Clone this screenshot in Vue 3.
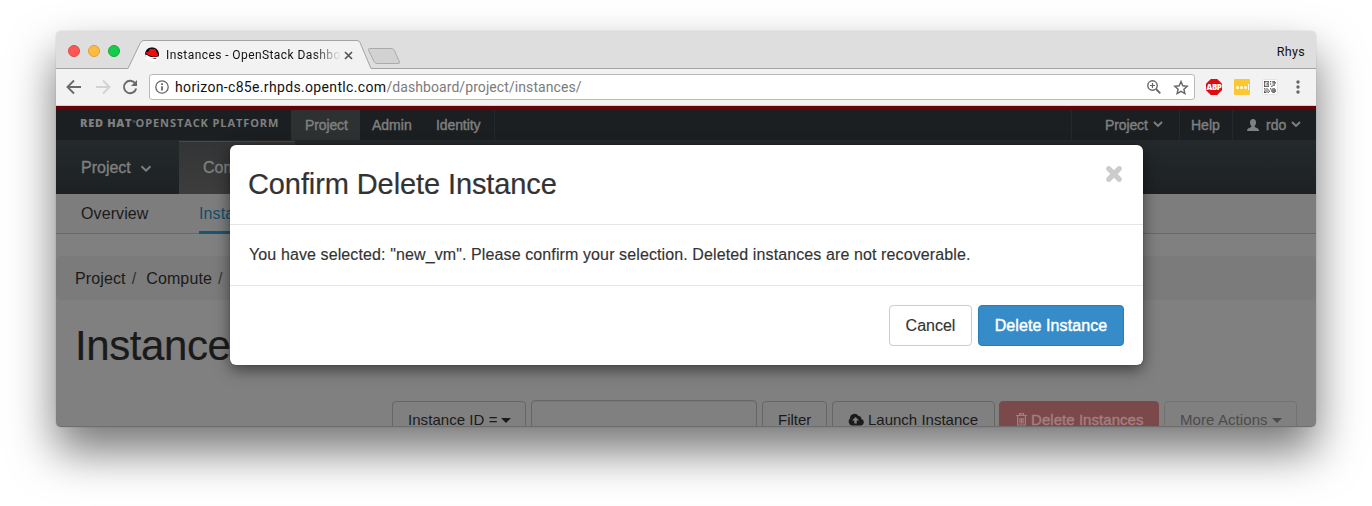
<script setup>
const qr = [
  '1111010110', '1001000111', '1011010010', '1001000110', '1111001000',
  '0000000000', '1010010110', '0101001111', '1010101111', '1101000110'
]
</script>

<template>
  <div class="desk">
    <div class="window">
      <div class="tabstrip">
        <div class="lights"><i class="red"></i><i class="amber"></i><i class="green"></i></div>
        <svg class="tabshape" width="276" height="38" viewBox="0 0 276 38">
          <path d="M0 37.500 L12.500 11.500 Q14 9.500 16 9.500 H229 Q231 9.500 232 11.500 L243 37.500 V39 H0Z" fill="#f2f2f2" />
          <path d="M0 37.500 L12.500 11.500 Q14 9.500 16 9.500 H229 Q231 9.500 232 11.500 L243 37.500" fill="none" stroke="#a3a3a3" />
          <path d="M241.500 17.500 H263 Q265.500 17.500 266.500 19.500 L271.500 31 Q272 32.500 270 32.500 H249 Q247 32.500 246 30.500 L240.500 19 Q240 17.500 241.500 17.500Z" fill="#d2d2d2" stroke="#ababab" />
        </svg>
        <div class="tab">
          <svg class="hat" width="16" height="16" viewBox="0 0 16 16">
            <path d="M1 9 C1 4 4 1.500 8 1.500 C12 1.500 15 4 15 9 L14.500 11 H2Z" fill="#090909" />
            <path d="M1 8.500 Q3 8.500 5 10.300 Q9 12 14.900 10.300 Q13 15.500 8 15.500 Q2 15.500 1 8.500Z" fill="#fff" />
            <path d="M4 6.300 L5.800 2.900 Q7 2.400 8 3.100 Q10.200 2 11.500 3.500 L13 7 Q15 8.800 13.500 10 Q10 11.800 5 9.300 Q1.300 7.500 2.200 6.300 Q3 5.600 4 6.300Z" fill="#f00d10" />
            <path d="M6.500 11.600 L9 12.400 L12.500 11.900 L11.800 13 L9.500 12.900Z" fill="#222" />
          </svg>
          <span class="tabtitle">Instances - OpenStack Dashbo</span>
          <svg class="tabx" width="9" height="9" viewBox="0 0 9 9"><path d="M1 1 L8 8 M8 1 L1 8" stroke="#555" stroke-width="1.700" /></svg>
        </div>
        <span class="user">Rhys</span>
      </div>

      <div class="toolbar">
        <svg class="back" width="16" height="16" viewBox="0 0 16 16"><path d="M15 8 H2 M8 1.500 L1.500 8 L8 14.500" fill="none" stroke="#6a6a6a" stroke-width="1.900" /></svg>
        <svg class="fwd" width="16" height="16" viewBox="0 0 16 16"><path d="M1 8 H14 M8 1.500 L14.500 8 L8 14.500" fill="none" stroke="#d2d2d2" stroke-width="1.900" /></svg>
        <svg class="reload" width="16" height="16" viewBox="0 0 16 16"><path d="M13.300 4.500 A6.200 6.200 0 1 0 14.200 9.500" fill="none" stroke="#6a6a6a" stroke-width="1.900" /><path d="M15 1 V7 H9Z" fill="#6a6a6a" /></svg>
        <div class="address">
          <svg width="14" height="14" viewBox="0 0 14 14"><circle cx="7" cy="7" r="6.200" fill="none" stroke="#666" stroke-width="1.300" /><path d="M7 6.200 V10.500 M7 3.300 V5" stroke="#555" stroke-width="1.600" /></svg>
          <span class="url"><b>horizon-c85e.rhpds.opentlc.com</b>/dashboard/project/instances/</span>
          <svg class="mag" width="14" height="14" viewBox="0 0 14 14"><circle cx="5.500" cy="5.500" r="4.700" fill="none" stroke="#666" stroke-width="1.400" /><path d="M9 9 L13.300 13.300" stroke="#666" stroke-width="1.800" /><path d="M3 5.500 H8 M5.500 3 V8" stroke="#666" stroke-width="1.200" /></svg>
          <svg class="star" width="16" height="15" viewBox="0 0 16 15"><path d="M8 1.500 L9.800 5.800 L14.200 6.200 L10.900 9.200 L11.900 13.500 L8 11.300 L4.100 13.500 L5.100 9.200 L1.800 6.200 L6.200 5.800Z" fill="none" stroke="#666" stroke-width="1.400" /></svg>
        </div>
        <div class="abp"><span>ABP</span></div>
        <div class="dots"><i></i><i></i><i></i><em></em></div>
        <svg class="qr" width="16" height="16" viewBox="0 0 16 16">
          <rect x=".5" y=".5" width="15" height="15" rx="1" fill="#fff" stroke="#e3e3e3" />
          <template v-for="(row, y) in qr" :key="y">
            <template v-for="(c, x) in row" :key="x">
              <rect v-if="c === '1'" :x="2 + x * 1.2" :y="2 + y * 1.2" width="1.200" height="1.200" fill="#4a4a4a" />
            </template>
          </template>
        </svg>
        <svg class="kebab" width="4" height="14" viewBox="0 0 4 14"><circle cx="2" cy="2" r="1.700" /><circle cx="2" cy="7" r="1.700" /><circle cx="2" cy="12" r="1.700" /></svg>
      </div>

      <div class="page">
        <div class="redline"></div>
        <div class="topnav">
          <span class="brand"><b>RED HAT</b><small>®</small><span>OPENSTACK PLATFORM</span></span>
          <span class="item on"><span class="t1">Project</span></span>
          <span class="item admin"><span>Admin</span></span>
          <span class="item ident"><span>Identity</span></span>
          <span class="item proj"><span class="t1">Project</span><svg class="chev" width="10" height="7" viewBox="0 0 10 7"><path d="M1 1 L5 5 L9 1" /></svg></span>
          <span class="item help"><span>Help</span></span>
          <span class="item rdo">
            <svg width="12" height="12" viewBox="0 0 12 12"><path d="M6 0 C8 0 9 1.500 9 3.500 C9 5.500 8.300 6 7.700 7 V8 L10.500 9.200 Q12 10 12 12 H0 Q0 10 1.500 9.200 L4.300 8 V7 C3.700 6 3 5.500 3 3.500 C3 1.500 4 0 6 0Z" fill="#7f8080" /></svg>
            <span>rdo</span><svg class="chev" width="10" height="7" viewBox="0 0 10 7"><path d="M1 1 L5 5 L9 1" /></svg></span>
        </div>
        <div class="midnav">
          <span class="mproj"><span>Project</span><svg class="chev" width="12" height="8" viewBox="0 0 12 8"><path d="M1.500 1.300 L6 5.700 L10.500 1.300" /></svg></span>
          <span class="mcomp">Com</span>
        </div>
        <div class="subnav"><span class="over"><span>Overview</span></span><span class="inst">Insta</span></div>
        <div class="crumbs"><span>Project</span><i>/</i><span>Compute</span><i>/</i></div>
        <h1><span>Instance</span></h1>
        <div class="actions">
          <span class="btn b1"><span>Instance ID =</span><u></u></span>
          <span class="btn field"></span>
          <span class="btn b2"><span>Filter</span></span>
          <span class="btn b3"><svg width="16" height="13" viewBox="0 0 16 13"><path d="M4 12.500 A4 4 0 0 1 2 5.600 A4.600 4.600 0 0 1 10.500 3 A2.800 2.800 0 0 1 13.300 6 A3.300 3.300 0 0 1 12.500 12.500Z" fill="#1b1b1b" /><path d="M7.500 4 L11 7.600 H8.700 V10.500 H6.300 V7.600 H4Z" fill="#808080" /></svg><span>Launch Instance</span></span>
          <span class="btn b4"><svg width="11" height="13" viewBox="0 0 11 13"><path d="M0 2.500 H11 M3.500 2 V.7 H7.500 V2 M1.600 3 V12 H9.400 V3 M3.900 5 V10.500 M5.500 5 V10.500 M7.100 5 V10.500" fill="none" stroke="#a47f80" stroke-width="1.200" /></svg><span>Delete Instances</span></span>
          <span class="btn b5"><span>More Actions</span><u></u></span>
        </div>

        <div class="modal">
          <div class="mhead"><span class="title">Confirm Delete Instance</span>
            <svg width="18" height="18" viewBox="0 0 18 18"><path d="M3.700 3.700 L14.300 14.300 M14.300 3.700 L3.700 14.300" stroke="#ccc" stroke-width="5.200" stroke-linecap="round" /></svg></div>
          <div class="mbody"><span>You have selected: "new_vm". Please confirm your selection. Deleted instances are not recoverable.</span></div>
          <div class="mfoot"><button class="cancel"><span>Cancel</span></button><button class="del"><span>Delete Instance</span></button></div>
        </div>
      </div>
    </div>
  </div>
</template>

<style>
body { margin: 0; background: #fff; overflow: hidden; }
</style>
<style scoped>
* { box-sizing: border-box; }
.desk { width: 1372px; height: 506px; padding: 31px 56px 0; overflow: hidden; font-family: "Liberation Sans", Arial, sans-serif; background: #fff; }
.window { position: relative; width: 1260px; height: 396px; border-radius: 5px; box-shadow: 0 0 1px rgba(0,0,0,.4), 0 24px 46px rgba(0,0,0,.54); }
svg { display: block; flex: none; }
span { white-space: nowrap; }
.tabstrip { position: relative; height: 38px; background: #dedede; border-bottom: 1px solid #a3a3a3; border-radius: 5px 5px 0 0; display: flex; }
.lights { display: flex; gap: 8px; margin: 14px 0 0 12px; }
.lights i { width: 12px; height: 12px; border-radius: 50%; border: 1px solid; }
.red { background: #fc5753; border-color: #df4744 !important; }
.amber { background: #fdbc40; border-color: #de9f34 !important; }
.green { background: #17cb4c; border-color: #12ac3d !important; }
.tabshape { position: absolute; left: 72px; top: 0; }
.tab { position: relative; display: flex; align-items: flex-start; margin-left: 24px; padding-top: 15px; width: 230px; }
.tabtitle { margin-left: 6px; width: 175px; font: 12px/18px Roboto, sans-serif; letter-spacing: .42px; color: #111; -webkit-mask-image: linear-gradient(90deg, #000 84%, transparent 100%); mask-image: linear-gradient(90deg, #000 84%, transparent 100%); }
.tabx { margin: 5px 0 0 3px; }
.user { margin-left: auto; margin-right: 11px; font: 12.500px/42px Roboto, sans-serif; letter-spacing: .3px; color: #111; }
.toolbar { height: 37px; background: #f2f2f2; border-bottom: 1px solid #d6d2d2; display: flex; align-items: center; }
.back { margin-left: 10px; } .fwd { margin-left: 13px; } .reload { margin-left: 11px; }
.address { margin-left: 11px; width: 1046px; height: 26px; background: #fff; border: 1px solid #b9b9b9; border-radius: 3px; display: flex; align-items: center; padding-left: 5px; }
.url { font: 14px/24px Roboto, sans-serif; letter-spacing: .08px; color: #7b7b7b; margin-left: 6px; }
.url b { font-weight: 400; color: #111; letter-spacing: .34px; }
.mag { margin-left: auto; } .star { margin: 0 5px 0 12px; }
.abp { margin-left: 11px; width: 16px; height: 16px; background: #e00b10; clip-path: polygon(30% 0, 70% 0, 100% 30%, 100% 70%, 70% 100%, 30% 100%, 0 70%, 0 30%); color: #fff; font: 800 8px/16px "Open Sans", sans-serif; display: flex; justify-content: center; letter-spacing: -.5px; }
.dots { margin-left: 12px; width: 16px; height: 16px; background: #f9c834; border-radius: 1px; display: flex; align-items: center; justify-content: center; gap: 1px; }
.dots i { width: 3px; height: 3px; border-radius: 50%; background: #fff; } .dots em { width: 1px; height: 6px; background: #fff; }
.qr { margin-left: 12px; } .kebab { margin-left: 18px; fill: #666; }
.page { height: 321px; background: #808080; overflow: hidden; border-radius: 0 0 5px 5px; border-bottom: 1px solid #6e6e6e; color: #1a1a1a; }
.redline { height: 4px; background: #680007; }
.topnav { height: 31px; display: flex; background: #1c1f22; border-bottom: 1px solid #26292b; color: #7f8080; font-size: 14px; line-height: 31px; -webkit-text-stroke: .4px; }
.t1 { letter-spacing: -.13px; }
.brand { width: 235px; padding-left: 24px; font: 700 11px/24px "Open Sans", sans-serif; letter-spacing: .9px; -webkit-text-stroke: 0; }
.brand b { font-weight: 800; letter-spacing: .7px; } .brand small { font-size: 4px; vertical-align: 4px; letter-spacing: 0; }
.item { display: flex; height: 30px; }
.on { background: #2e3132; width: 69px; padding-left: 14px; }
.admin { padding-left: 12px; width: 64px; } .ident { padding-left: 12px; width: 71px; border-right: 1px solid #26292b; letter-spacing: -.1px; }
.proj { margin-left: auto; width: 108px; padding-left: 33px; border-left: 1px solid #26292b; } .help { width: 53px; padding-left: 11px; border-left: 1px solid #26292b; }
.rdo { width: 84px; padding-left: 14px; border-left: 1px solid #26292b; } .rdo > svg:first-child { margin: 9px 7px 0 0; }
.chev { margin: 11px 0 0 5px; fill: none; stroke: #7f8080; stroke-width: 1.900; }
.midnav { height: 53px; display: flex; background: linear-gradient(#24292c, #1d2123); color: #7f8080; font-size: 16px; line-height: 53px; -webkit-text-stroke: .35px; }
.mproj { width: 123px; padding-left: 25px; display: flex; } .mproj .chev { margin: 24px 0 0 9px; }
.mcomp { width: 116px; padding-left: 24px; background: linear-gradient(#333435, #3d3d3d); border-top: 1px solid #484848; line-height: 51px; }
.subnav { height: 40px; display: flex; background: #7d7d7d; border-bottom: 1px solid #686868; font-size: 16px; line-height: 40px; letter-spacing: .1px; }
.over { margin-left: 25px; width: 118px; } .inst { height: 40px; width: 68px; color: #124d6b; border-bottom: 3px solid #165773; }
.crumbs { height: 44px; margin-top: 22px; padding-left: 19px; background: #7b7b7b; border-radius: 5px; display: flex; font-size: 16px; line-height: 46px; letter-spacing: .12px; }
.crumbs i { font-style: normal; margin: 0 10px 0 6px; color: #333; }
h1 { font-weight: 400; font-size: 42px; line-height: 48px; letter-spacing: -.4px; margin: 22px 0 0 19px; height: 79px; -webkit-text-stroke: .2px; }
.actions { display: flex; margin-left: 336px; }
.btn { display: flex; height: 40px; border: 1px solid #666; border-radius: 4px; font-size: 15px; line-height: 36px; padding-left: 16px; }
.btn u { margin: 16px 0 0 4px; width: 0; height: 0; border: 5px solid transparent; border-top: 5px solid; border-bottom: 0; }
.b1 { width: 134px; padding-left: 15px; letter-spacing: .05px; } .field { width: 226px; margin: 0 5px; height: 42px; margin-top: -1px; box-shadow: inset 0 1px 1px #777; }
.b2 { width: 65px; padding-left: 15px; } .b3 { width: 163px; margin-left: 5px; padding-left: 15px; } .b3 svg { margin: 11px 4px 0 0; }
.b4 { width: 160px; margin-left: 4px; background: #7c494b; border-color: #7c494b; color: #a47f80; -webkit-text-stroke: .4px; } .b4 svg { margin: 11px 4px 0 0; } .b4 span { letter-spacing: .05px; }
.b5 { width: 133px; margin-left: 5px; border-color: #727272; color: #4b4b4b; padding-left: 15px; letter-spacing: .08px; }
.modal { position: absolute; left: 174px; top: 114px; width: 913px; height: 220px; background: #fff; border-radius: 6px; box-shadow: 0 0 1px rgba(0,0,0,.6), 0 5px 15px rgba(0,0,0,.5); color: #333; }
.mhead { height: 80px; border-bottom: 1px solid #e5e5e5; padding: 19px 20px 0 18px; display: flex; justify-content: space-between; font-size: 29px; line-height: 40px; letter-spacing: -.1px; -webkit-text-stroke: .2px; }
.mhead svg { margin-top: 1px; }
.mbody { height: 61px; padding-left: 19px; font-size: 16px; line-height: 59px; letter-spacing: .11px; border-bottom: 1px solid #e5e5e5; -webkit-text-stroke: .15px; }
.mfoot { padding: 19px 19px 0; display: flex; justify-content: flex-end; gap: 6px; }
button { height: 41px; border-radius: 4px; font: 16px/37px "Liberation Sans", sans-serif; padding: 0; border: 1px solid #ccc; background: #fff; color: #333; -webkit-text-stroke: .15px; }
.cancel { width: 83px; } .del { width: 146px; color: #fff; background: #358cc8; border-color: #2b7db6; -webkit-text-stroke: .45px; letter-spacing: .1px; }
</style>
